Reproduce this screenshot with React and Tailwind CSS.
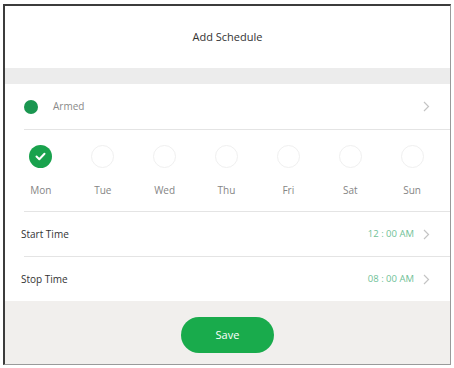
import React from "react";

const days = ["Mon", "Tue", "Wed", "Thu", "Fri", "Sat", "Sun"];

const Chevron = ({ className = "" }) => (
  <svg className={className} width="7" height="11" viewBox="0 0 7 11" fill="none">
    <path d="M1 1l4.5 4.5L1 10" stroke="#c4c4c4" strokeWidth="1.2" />
  </svg>
);

export default function App() {
  return (
    <div className="w-[454px] h-[368px] bg-white pl-[3px] pt-[4px] pr-[3px] pb-[3px] font-['Open_Sans',sans-serif]">
      <div className="w-full h-full border-l-2 border-t-2 border-r border-b border-l-[#3c3c3c] border-t-[#3c3c3c] border-r-[#9a9a9a] border-b-[#9a9a9a] flex flex-col">
        {/* header */}
        <div className="h-[62px] flex items-center justify-center">
          <span className="text-[11px] text-[#333]">Add Schedule</span>
        </div>
        <div className="h-[16px] bg-[#ececec]" />

        {/* armed */}
        <div className="h-[45px] flex items-center pl-[19px] pr-[20px]">
          <div className="w-[14px] h-[14px] rounded-full bg-[#1a9650]" />
          <span className="ml-[15px] text-[10px] text-[#8a8a8a]">Armed</span>
          <Chevron className="ml-auto" />
        </div>
        <div className="ml-[19px] h-px bg-[#e4e4e4]" />

        {/* days */}
        <div className="h-[81px] grid grid-cols-7 ml-[5px] mr-[7px] pt-[15px]">
          {days.map((d, i) => (
            <div key={d} className="flex flex-col items-center">
              {i === 0 ? (
                <div className="w-[23px] h-[23px] rounded-full bg-[#19a24d] flex items-center justify-center">
                  <svg width="11" height="9" viewBox="0 0 11 9" fill="none">
                    <path d="M1.5 4.5l2.8 2.8L9.5 1.8" stroke="white" strokeWidth="2" strokeLinecap="round" strokeLinejoin="round" />
                  </svg>
                </div>
              ) : (
                <div className="w-[23px] h-[23px] rounded-full border border-[#f0f0f0]" />
              )}
              <span className="mt-[15px] text-[10px] text-[#858585]">{d}</span>
            </div>
          ))}
        </div>
        <div className="ml-[19px] h-px bg-[#e4e4e4]" />

        {/* times */}
        <div className="h-[44px] flex items-center pl-[16px] pr-[20px]">
          <span className="text-[10px] text-[#333]">Start Time</span>
          <span className="ml-auto mr-[9px] text-[9.5px] text-[#6fbf97]">12 : 00 AM</span>
          <Chevron />
        </div>
        <div className="ml-[19px] h-px bg-[#e4e4e4]" />
        <div className="h-[44px] flex items-center pl-[16px] pr-[20px]">
          <span className="text-[10px] text-[#333]">Stop Time</span>
          <span className="ml-auto mr-[9px] text-[9.5px] text-[#6fbf97]">08 : 00 AM</span>
          <Chevron />
        </div>

        {/* footer */}
        <div className="flex-1 bg-[#f1efed] flex items-start justify-center pt-[16px]">
          <button className="w-[93px] h-[36px] rounded-full bg-[#19ab4c] text-white text-[11px]">
            Save
          </button>
        </div>
      </div>
    </div>
  );
}
